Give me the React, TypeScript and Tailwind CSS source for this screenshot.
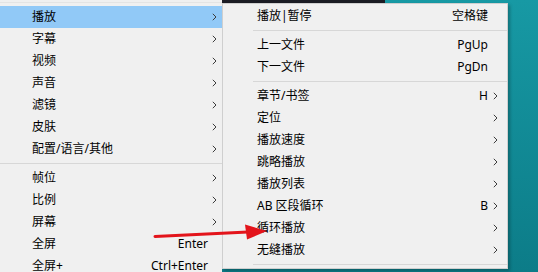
import React from 'react'

type Item =
  | { sep: true }
  | { label: string; key?: string; sub?: boolean; active?: boolean; sep?: false }

const LEFT: Item[] = [
  { label: '播放', sub: true, active: true },
  { label: '字幕', sub: true },
  { label: '视频', sub: true },
  { label: '声音', sub: true },
  { label: '滤镜', sub: true },
  { label: '皮肤', sub: true },
  { label: '配置/语言/其他', sub: true },
  { sep: true },
  { label: '帧位', sub: true },
  { label: '比例', sub: true },
  { label: '屏幕', sub: true },
  { label: '全屏', key: 'Enter' },
  { label: '全屏+', key: 'Ctrl+Enter' },
]

const RIGHT: Item[] = [
  { label: '播放|暂停', key: '空格键' },
  { sep: true },
  { label: '上一文件', key: 'PgUp' },
  { label: '下一文件', key: 'PgDn' },
  { sep: true },
  { label: '章节/书签', key: 'H', sub: true },
  { label: '定位', sub: true },
  { label: '播放速度', sub: true },
  { label: '跳略播放', sub: true },
  { label: '播放列表', sub: true },
  { label: 'AB 区段循环', key: 'B', sub: true },
  { label: '循环播放', sub: true },
  { label: '无缝播放', sub: true },
  { sep: true },
]

function Chevron() {
  return (
    <svg width="5" height="8" viewBox="0 0 5 8" className="block">
      <polyline points="0.8,0.8 4,4 0.8,7.2" fill="none" stroke="#3c3c3c" strokeWidth="1" />
    </svg>
  )
}

function LeftMenu() {
  return (
    <div className="w-[222px] h-full shrink-0 bg-[#f0f0f0] pt-[6px] relative">
      <div className="absolute left-0 right-0 top-[2px] h-px bg-[#e4e4e4]" />
      {LEFT.map((it, i) =>
        it.sep ? (
          <div key={i} className="h-[7px] flex items-center">
            <div className="h-px w-full bg-[#d7d7d7]" />
          </div>
        ) : (
          <div
            key={i}
            className={`h-[22px] flex items-center pl-[32px] ${it.active ? 'bg-[#91c9f7]' : ''}`}
          >
            <span className="flex-1">{it.label}</span>
            {it.key && <span>{it.key}</span>}
            <div className="w-[14px] pl-[4px] flex items-center">{it.sub && <Chevron />}</div>
          </div>
        )
      )}
    </div>
  )
}

function SubMenu() {
  return (
    <div className="w-[286px] shrink-0 bg-[#f0f0f0] border border-[#cfcfcf] pt-px shadow-[2px_2px_3px_rgba(0,0,0,0.25)]">
      {RIGHT.map((it, i) =>
        it.sep ? (
          <div key={i} className="h-[7px] flex items-center pl-[30px]">
            <div className="h-px w-full bg-[#d7d7d7]" />
          </div>
        ) : (
          <div key={i} className="h-[22px] flex items-center pl-[34px]">
            <span className="flex-1">{it.label}</span>
            {it.key && <span>{it.key}</span>}
            <div className="w-[19px] pl-[5px] flex items-center">{it.sub && <Chevron />}</div>
          </div>
        )
      )}
    </div>
  )
}

export default function App() {
  return (
    <div className="w-[538px] h-[272px] overflow-hidden relative flex text-[12px] text-black font-['Segoe_UI','Noto_Sans','Noto_Sans_CJK_SC',sans-serif]">
      <LeftMenu />
      <div className="flex-1 flex flex-col bg-gradient-to-b from-[#1799a4] to-[#0c7c88]">
        <div className="h-[3px] flex shrink-0">
          <div className="w-[163px] bg-[#1b1c24]" />
          <div className="flex-1" />
        </div>
        <div className="flex">
          <SubMenu />
        </div>
      </div>

      {/* red annotation arrow */}
      <svg className="absolute left-0 top-0 pointer-events-none" width="538" height="272">
        <line x1="155" y1="236.5" x2="248" y2="232" stroke="#e3141b" strokeWidth="3" strokeLinecap="round" />
        <polygon points="245,224.5 267,231 247,239.5" fill="#e3141b" />
      </svg>
    </div>
  )
}
